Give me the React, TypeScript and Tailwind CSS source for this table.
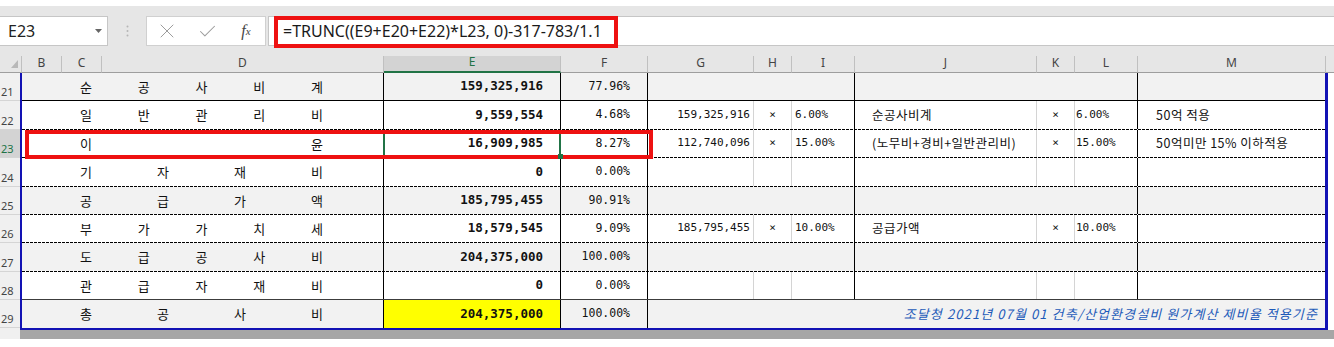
import { Check, X } from 'lucide-react';

type Line = 'solid' | 'dashed' | 'dark' | 'none';

type Row = {
  n: number;
  label: string[];
  e: string;
  f: string;
  g?: string;
  h?: string;
  i?: string;
  j?: string;
  k?: string;
  l?: string;
  m?: string;
  note?: string;
  gray?: boolean;
  tall?: boolean;
  line: Line;
};

const KR = "font-['Noto_Sans_CJK_KR',sans-serif]";
const MONO = "font-['DejaVu_Sans_Mono',monospace]";
const UI = "font-['Noto_Sans',sans-serif]";

const rows: Row[] = [
  { n: 21, label: ['순', '공', '사', '비', '계'], e: '159,325,916', f: '77.96%', gray: true, line: 'solid' },
  {
    n: 22, label: ['일', '반', '관', '리', '비'], e: '9,559,554', f: '4.68%',
    g: '159,325,916', h: '×', i: '6.00%', j: '순공사비계', k: '×', l: '6.00%', m: '50억 적용',
    tall: true, line: 'dashed',
  },
  {
    n: 23, label: ['이', '윤'], e: '16,909,985', f: '8.27%',
    g: '112,740,096', h: '×', i: '15.00%', j: '(노무비+경비+일반관리비)', k: '×', l: '15.00%', m: '50억미만 15% 이하적용',
    line: 'dashed',
  },
  { n: 24, label: ['기', '자', '재', '비'], e: '0', f: '0.00%', tall: true, line: 'dashed' },
  { n: 25, label: ['공', '급', '가', '액'], e: '185,795,455', f: '90.91%', gray: true, line: 'dashed' },
  {
    n: 26, label: ['부', '가', '가', '치', '세'], e: '18,579,545', f: '9.09%',
    g: '185,795,455', h: '×', i: '10.00%', j: '공급가액', k: '×', l: '10.00%',
    line: 'dashed',
  },
  { n: 27, label: ['도', '급', '공', '사', '비'], e: '204,375,000', f: '100.00%', gray: true, tall: true, line: 'dashed' },
  { n: 28, label: ['관', '급', '자', '재', '비'], e: '0', f: '0.00%', line: 'dark' },
  {
    n: 29, label: ['총', '공', '사', '비'], e: '204,375,000', f: '100.00%', gray: true, tall: true, line: 'none',
    note: '조달청 2021년 07월 01 건축/산업환경설비 원가계산 제비율 적용기준',
  },
];

const lineClass: Record<Line, string> = {
  solid: 'h-px bg-black',
  dashed: 'h-px bg-[image:repeating-linear-gradient(to_right,#000_0px,#000_3px,transparent_3px,transparent_4px)]',
  dark: 'h-px bg-[#3c3c3c]',
  none: 'hidden',
};

const headers = [
  { c: 'B', w: 'w-[40px]' },
  { c: 'C', w: 'w-[40px]' },
  { c: 'D', w: 'w-[282px]' },
  { c: 'E', w: 'w-[177px]' },
  { c: 'F', w: 'w-[87px]' },
  { c: 'G', w: 'w-[106px]' },
  { c: 'H', w: 'w-[38px]' },
  { c: 'I', w: 'w-[63px]' },
  { c: 'J', w: 'w-[182px]' },
  { c: 'K', w: 'w-[38px]' },
  { c: 'L', w: 'w-[63px]' },
  { c: 'M', w: 'w-[188px]' },
];

const FormulaBar = () => (
  <div className="flex h-[30px]">
    {/* Name box */}
    <div className={`flex w-[108px] items-center justify-between border-y border-r border-[#c6c6c6] bg-white pl-[8px] pr-[5px] ${UI} text-[16px] text-[#222]`}>
      <span>E23</span>
      <svg width="7" height="4" viewBox="0 0 7 4">
        <path d="M0 0h7L3.5 4z" fill="#666" />
      </svg>
    </div>
    <div className="flex w-[38px] items-center justify-center">
      <svg width="3" height="12" viewBox="0 0 3 12">
        <circle cx="1.5" cy="1.5" r="1" fill="#b5b5b5" />
        <circle cx="1.5" cy="6" r="1" fill="#b5b5b5" />
        <circle cx="1.5" cy="10.5" r="1" fill="#b5b5b5" />
      </svg>
    </div>
    {/* Cancel / Enter / Insert function */}
    <div className="flex w-[120px] border border-[#d0d0d0] bg-white">
      <div className="flex w-[40px] items-center justify-center">
        <X size={24} strokeWidth={1} color="#9c9c9c" />
      </div>
      <div className="flex w-[40px] items-center justify-center">
        <Check size={21} strokeWidth={1.2} color="#9c9c9c" />
      </div>
      <div className="flex w-[38px] items-center justify-center font-['Liberation_Serif',serif] italic text-[#444]">
        <span className="text-[16px]">f</span>
        <span className="text-[11px]">x</span>
      </div>
    </div>
    {/* Formula input */}
    <div className={`relative ml-[2px] flex flex-1 items-center border-y border-l border-[#c6c6c6] bg-white pl-[14px] ${UI} text-[16px] text-[#1a1a1a]`}>
      =TRUNC((E9+E20+E22)*L23, 0)-317-783/1.1
      <div className="absolute left-[5px] top-[-1px] h-[32px] w-[344px] border-[4px] border-[#ee1111]" />
    </div>
  </div>
);

const ColumnHeaders = () => (
  <div className={`mt-[10px] flex h-[17px] ${UI} text-[12px] leading-none text-[#444]`}>
    <div className="relative w-[22px] border-r border-b border-r-[#c0c0c0] border-b-[#9e9e9e]">
      <svg className="absolute left-[11px] top-[4px]" width="7" height="8" viewBox="0 0 7 8">
        <path d="M7 0v8H0z" fill="#b8b8b8" />
      </svg>
    </div>
    {headers.map((h) =>
      h.c === 'E' ? (
        <div key={h.c} className={`${h.w} flex items-end justify-center border-r border-b-2 border-r-[#c0c0c0] border-b-[#217346] bg-[#d3d3d3] pb-[3px] text-[#217346]`}>
          {h.c}
        </div>
      ) : (
        <div key={h.c} className={`${h.w} flex items-end justify-center border-r border-b border-r-[#c0c0c0] border-b-[#9e9e9e] pb-[3px]`}>
          {h.c}
        </div>
      ),
    )}
    <div className="flex-1 border-b border-[#9e9e9e]" />
  </div>
);

const SheetRow = ({ r }: { r: Row }) => {
  const bg = r.gray ? 'bg-[#f2f2f2]' : 'bg-white';
  const grid = r.gray ? 'border-transparent' : 'border-[#d4d4d4]';
  const small = `${MONO} text-[11px] text-[#111]`;
  const text = `${KR} text-[12.5px] tracking-[0.5px] text-[#111]`;

  return (
    <>
      <div className={`relative flex ${r.tall ? 'h-[28px]' : 'h-[27px]'} ${bg}`}>
        {/* B:D merged label, distributed */}
        <div className={`flex w-[362px] items-center justify-between border-r border-black pl-[58px] pr-[60px] ${KR} text-[13px] text-[#111]`}>
          {r.label.map((c, idx) => (
            <span key={idx}>{c}</span>
          ))}
        </div>
        <div className={`relative flex w-[177px] items-center justify-end border-r border-black pr-[17px] ${MONO} text-[12.5px] font-bold text-[#111] ${r.n === 29 ? 'bg-[#ffff00]' : ''}`}>
          {r.e}
          {r.n === 23 && (
            <>
              <div className="absolute -left-px -right-px top-0 bottom-0 border-x-2 border-[#217346]" />
              <div className="absolute -right-[3px] -bottom-[2px] z-20 h-[5px] w-[5px] bg-[#217346]" />
            </>
          )}
        </div>
        <div className={`flex w-[87px] items-center justify-end border-r border-black pr-[17px] ${MONO} text-[11.5px] text-[#111]`}>
          {r.f}
        </div>
        {r.note ? (
          <div className={`flex w-[677px] items-center justify-end pr-[7px] ${KR} text-[13px] italic tracking-[1.1px] text-[#1d5ab9]`}>
            {r.note}
          </div>
        ) : (
          <>
            <div className={`flex w-[106px] items-center justify-end border-r ${grid} pr-[3px] ${small}`}>{r.g}</div>
            <div className={`flex w-[38px] items-center justify-center border-r ${grid} ${small}`}>{r.h}</div>
            <div className={`flex w-[63px] items-center border-r border-black pl-[3px] ${small}`}>{r.i}</div>
            <div className={`flex w-[182px] items-center border-r ${grid} pl-[17px] ${text}`}>{r.j}</div>
            <div className={`flex w-[38px] items-center justify-center border-r ${grid} ${small}`}>{r.k}</div>
            <div className={`flex w-[63px] items-center border-r border-black pl-[1px] ${small}`}>{r.l}</div>
            <div className={`flex w-[187px] items-center pl-[18px] ${text}`}>{r.m}</div>
          </>
        )}
        {r.n === 23 && (
          <div className="absolute left-[3px] top-0 z-10 h-[29px] w-[628px] border-[4px] border-[#ee1111]" />
        )}
      </div>
      <div className={lineClass[r.line]} />
    </>
  );
};

const RowHeader = ({ r }: { r: Row }) => {
  const hRow = r.line === 'none' ? (r.tall ? 'h-[28px]' : 'h-[27px]') : r.tall ? 'h-[29px]' : 'h-[28px]';
  const active = r.n === 23;
  return (
    <div
      className={`flex ${hRow} items-end justify-start border-b border-[#d5d5d5] pb-[3px] pl-px ${UI} text-[11px] leading-none whitespace-nowrap ${
        active ? 'bg-[#d3d3d3] text-[#217346]' : 'text-[#444]'
      }`}
    >
      {r.n}
    </div>
  );
};

export default function App() {
  return (
    <div className="h-[347px] w-[1334px] overflow-hidden bg-white">
      <div className="h-[6px] bg-white" />
      <div className="bg-[#e6e6e6] pt-[10px]">
        <FormulaBar />
        <ColumnHeaders />
      </div>

      <div className="flex">
        {/* Row numbers */}
        <div className="flex w-[20px] flex-col bg-[#f0f0f0]">
          {rows.map((r) => (
            <RowHeader key={r.n} r={r} />
          ))}
          <div className="h-[11px]" />
        </div>

        <div className="flex flex-col">
          <div className="w-[1308px] border-l-2 border-r-[3px] border-b-2 border-[#1212b4] bg-white">
            {rows.map((r) => (
              <SheetRow key={r.n} r={r} />
            ))}
          </div>
          <div className="h-[9px] w-[1314px] bg-[#a6a6a6]" />
        </div>
      </div>
    </div>
  );
}
